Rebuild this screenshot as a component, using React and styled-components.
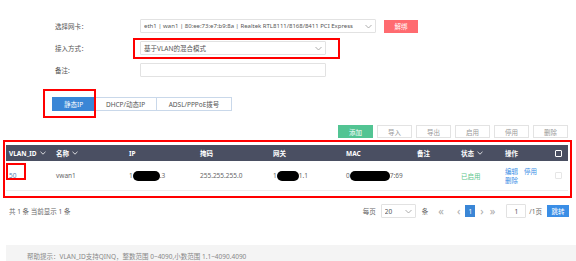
import React from 'react'
import styled, { createGlobalStyle } from 'styled-components'

const Global = createGlobalStyle`
  html, body { margin: 0; padding: 0; background: #fff; }
  body {
    font-family: "Noto Sans", "Noto Sans CJK SC", sans-serif;
    font-size: 7px;
    color: #555;
  }
`

const Page = styled.div`
  width: 576px;
  height: 261px;
  overflow: hidden;
  display: flex;
  flex-direction: column;
`

const Form = styled.div`
  padding: 19px 0 0 55px;
  display: flex;
  flex-direction: column;
  gap: 8px;
`

const FormRow = styled.div`
  display: flex;
  align-items: center;
  height: 14px;
  position: relative;
`

const Label = styled.div`
  width: 85px;
  color: #555;
  font-size: 6.5px;
`

const Field = styled.div`
  width: ${p => p.$w}px;
  height: 14px;
  box-sizing: border-box;
  border: 1px solid #e2e2e2;
  border-radius: 1px;
  display: flex;
  align-items: center;
  padding: 0 3px;
  font-size: ${p => p.$small ? 6 : 6.5}px;
  color: #555;
  white-space: nowrap;
  overflow: hidden;
`

const FieldText = styled.span`
  flex: 1;
  overflow: hidden;
`

const Caret = styled.svg`
  width: 7px;
  height: 5px;
  flex: none;
  margin-left: 3px;
`

const DangerButton = styled.button`
  margin-left: 8px;
  width: 34px;
  height: 13px;
  border: none;
  background: #ff6b70;
  color: #fff;
  font-family: inherit;
  font-size: 6.5px;
  padding: 0;
`

const Mark = styled.div`
  position: absolute;
  border: 2px solid #f00;
  pointer-events: none;
  left: ${p => p.$l}px;
  top: ${p => p.$t}px;
  width: ${p => p.$w}px;
  height: ${p => p.$h}px;
  box-sizing: border-box;
`

const Tabs = styled.div`
  margin: 20px 0 0 53px;
  display: flex;
  position: relative;
`

const Tab = styled.div`
  height: 14px;
  box-sizing: border-box;
  display: flex;
  align-items: center;
  justify-content: center;
  width: ${p => p.$w}px;
  border: 1px solid ${p => (p.$active ? '#3a86d6' : '#c9d8ea')};
  margin-left: -1px;
  background: ${p => (p.$active ? '#3a86d6' : '#fff')};
  color: ${p => (p.$active ? '#fff' : '#555')};
  font-size: 6.5px;
`

const Toolbar = styled.div`
  margin: 14px 8px 0 0;
  display: flex;
  justify-content: flex-end;
  gap: 4px;
`

const ToolButton = styled.button`
  width: 35px;
  height: 13px;
  padding: 0;
  font-family: inherit;
  font-size: 6.5px;
  border: 1px solid ${p => (p.$primary ? '#52c493' : '#e3e3e3')};
  background: ${p => (p.$primary ? '#52c493' : '#fff')};
  color: ${p => (p.$primary ? '#fff' : '#999')};
`

const TableMark = styled.div`
  margin: 2px 0 0 3px;
  width: 569px;
  box-sizing: border-box;
  border: 2px solid #f00;
  padding: 3px 2px 5px 1px;
`

const Table = styled.div`
  display: flex;
  flex-direction: column;
`

const cols = '47px 73px 71px 73px 73px 71px 44px 44px 50px 1fr'

const HeadRow = styled.div`
  display: grid;
  grid-template-columns: ${cols};
  height: 16px;
  align-items: center;
  padding-left: 3px;
  background: #4a4f62;
  color: #fff;
  font-weight: bold;
  font-size: 6.5px;
`

const BodyRow = styled.div`
  display: grid;
  grid-template-columns: ${cols};
  height: 29px;
  align-items: center;
  padding-left: 3px;
  border-bottom: 1px solid #eee;
  font-size: 6.5px;
  color: #666;
`

const Cell = styled.div`
  position: relative;
  display: flex;
  align-items: center;
  white-space: nowrap;
  color: ${p => p.$color || 'inherit'};
`

const Sort = styled.svg`
  width: 6px;
  height: 4px;
  margin-left: 3px;
`

const Box = styled.span`
  width: 7px;
  height: 7px;
  box-sizing: border-box;
  border: 1px solid ${p => (p.$light ? '#e6e6e6' : '#fff')};
  border-radius: 1px;
  display: inline-block;
`

const Blob = styled.span`
  display: inline-block;
  width: ${p => p.$w}px;
  height: 10px;
  background: #000;
  border-radius: 5px;
`

const Actions = styled.div`
  display: flex;
  flex-direction: column;
  line-height: 9px;
  color: #3a8ee6;
  span + span { margin-left: 6px; }
`

const IdMark = styled.div`
  position: absolute;
  left: -3px;
  top: -8px;
  width: 20px;
  height: 17px;
  border: 2px solid #f00;
  box-sizing: border-box;
`

const Footer = styled.div`
  margin: 6px 7px 0 9px;
  display: flex;
  align-items: center;
  height: 14px;
  font-size: 6.5px;
  color: #666;
`

const Summary = styled.div`
  flex: 1;
`

const Pager = styled.div`
  display: flex;
  align-items: center;
`

const PageSize = styled(Field)`
  width: 35px;
  height: 14px;
  margin: 0 6px 0 5px;
`

const Arrow = styled.span`
  color: #aaa;
  font-size: 11px;
  line-height: 12px;
  margin: 0 ${p => p.$m || 3}px;
`

const Current = styled.span`
  width: 10px;
  height: 12px;
  margin: 0 2px;
  background: #3a86d6;
  color: #fff;
  display: flex;
  align-items: center;
  justify-content: center;
`

const PageInput = styled(Field)`
  width: 20px;
  justify-content: center;
  margin: 0 3px 0 8px;
`

const Jump = styled.button`
  margin-left: 5px;
  width: 22px;
  height: 12px;
  padding: 0;
  border: none;
  background: #3a8ee6;
  color: #fff;
  font-family: inherit;
  font-size: 6.5px;
`

const Help = styled.div`
  margin: 27px 0 0 6px;
  flex: 1;
  background: #f4f4f4;
  padding: 8px 0 0 21px;
  line-height: 8px;
  font-size: 6.5px;
  color: #888;
`

const Chevron = () => (
  <Caret viewBox="0 0 7 5">
    <path d="M0.5 1 L3.5 4 L6.5 1" fill="none" stroke="#999" strokeWidth="0.8" />
  </Caret>
)

const SortIcon = () => (
  <Sort viewBox="0 0 6 4">
    <path d="M0.5 0.8 L3 3.2 L5.5 0.8" fill="none" stroke="#fff" strokeWidth="0.8" />
  </Sort>
)

export default function App() {
  return (
    <Page>
      <Global />
      <Form>
        <FormRow>
          <Label>选择网卡：</Label>
          <Field $w={236} $small>
            <FieldText>eth1 | wan1 | 80:ee:73:e7:b9:8a | Realtek RTL8111/8168/8411 PCI Express</FieldText>
            <Chevron />
          </Field>
          <DangerButton>解绑</DangerButton>
        </FormRow>
        <FormRow>
          <Label>接入方式：</Label>
          <Field $w={186}>
            <FieldText>基于VLAN的混合模式</FieldText>
            <Chevron />
          </Field>
          <Mark $l={78} $t={-3} $w={207} $h={21} />
        </FormRow>
        <FormRow>
          <Label>备注:</Label>
          <Field $w={186} />
        </FormRow>
      </Form>

      <Tabs>
        <Tab $active $w={43}>静态IP</Tab>
        <Tab $w={63}>DHCP/动态IP</Tab>
        <Tab $w={76}>ADSL/PPPoE拨号</Tab>
        <Mark $l={-10} $t={-8} $w={53} $h={29} />
      </Tabs>

      <Toolbar>
        <ToolButton $primary>添加</ToolButton>
        <ToolButton>导入</ToolButton>
        <ToolButton>导出</ToolButton>
        <ToolButton>启用</ToolButton>
        <ToolButton>停用</ToolButton>
        <ToolButton>删除</ToolButton>
      </Toolbar>

      <TableMark>
        <Table>
          <HeadRow>
            <Cell>VLAN_ID<SortIcon /></Cell>
            <Cell>名称<SortIcon /></Cell>
            <Cell>IP</Cell>
            <Cell>掩码</Cell>
            <Cell>网关</Cell>
            <Cell>MAC</Cell>
            <Cell>备注</Cell>
            <Cell>状态<SortIcon /></Cell>
            <Cell>操作</Cell>
            <Cell><Box /></Cell>
          </HeadRow>
          <BodyRow>
            <Cell $color="#5a7fb0">50<IdMark /></Cell>
            <Cell>vwan1</Cell>
            <Cell>1<Blob $w={27} />.3</Cell>
            <Cell>255.255.255.0</Cell>
            <Cell>1<Blob $w={22} />1.1</Cell>
            <Cell>0<Blob $w={40} />7:69</Cell>
            <Cell />
            <Cell $color="#5cc58a">已启用</Cell>
            <Cell>
              <Actions>
                <div><span>编辑</span><span>停用</span></div>
                <div><span>删除</span></div>
              </Actions>
            </Cell>
            <Cell><Box $light /></Cell>
          </BodyRow>
        </Table>
      </TableMark>

      <Footer>
        <Summary>共 1 条 当前显示 1 条</Summary>
        <Pager>
          <span>每页</span>
          <PageSize as="div">
            <FieldText>20</FieldText>
            <Chevron />
          </PageSize>
          <span>条</span>
          <Arrow $m={10}>«</Arrow>
          <Arrow>‹</Arrow>
          <Current>1</Current>
          <Arrow>›</Arrow>
          <Arrow>»</Arrow>
          <PageInput as="div">1</PageInput>
          <span>/1页</span>
          <Jump>跳转</Jump>
        </Pager>
      </Footer>

      <Help>帮助提示：VLAN_ID支持QINQ，整数范围 0~4090,小数范围 1.1~4090.4090</Help>
    </Page>
  )
}
